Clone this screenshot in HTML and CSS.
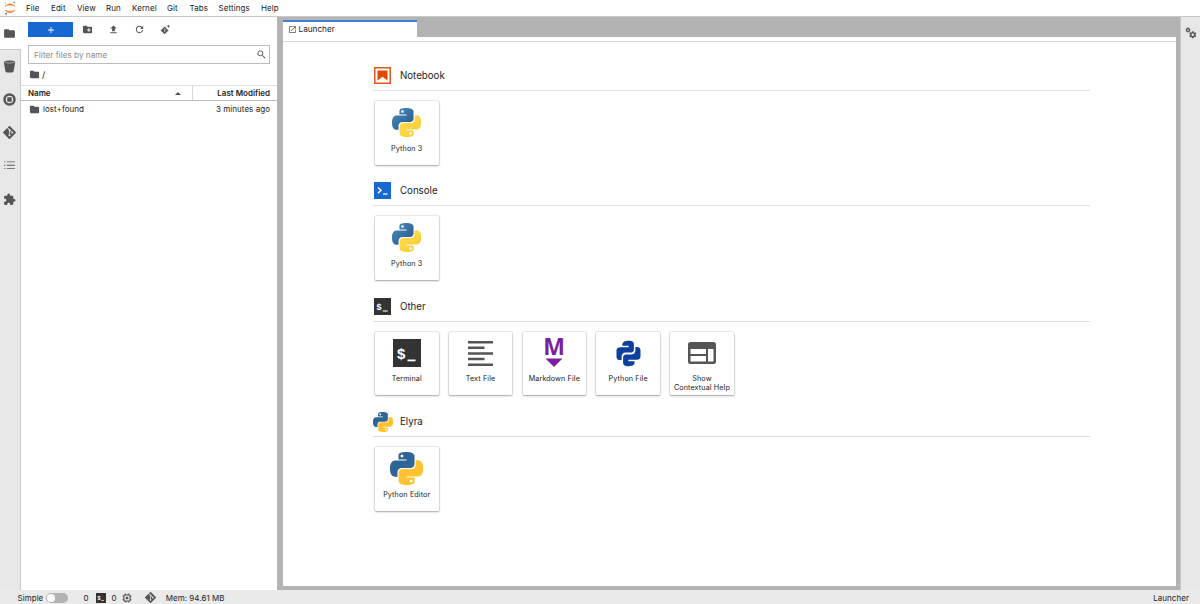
FILE: index.html
```html
<!DOCTYPE html>
<html lang="en">
<head>
    <meta charset="UTF-8">
    <meta name="viewport" content="width=device-width, initial-scale=1.0">
    <title>JupyterLab</title>
    <link rel="stylesheet" href="styles.css">
</head>
<body>

    <!-- Shared icons -->
    <svg class="sprite">
        <linearGradient id="py-blue" x1="0" y1="0" x2="1" y2="1">
            <stop offset="0" stop-color="#4a8fc4"/>
            <stop offset="1" stop-color="#265380"/>
        </linearGradient>
        <linearGradient id="py-yellow" x1="0" y1="0" x2="1" y2="1">
            <stop offset="0" stop-color="#ffdf55"/>
            <stop offset="1" stop-color="#f8ca35"/>
        </linearGradient>
        <symbol id="folder" viewBox="0 0 24 24"><path d="M10 4H4c-1.1 0-1.99.9-1.99 2L2 18c0 1.1.9 2 2 2h16c1.1 0 2-.9 2-2V8c0-1.1-.9-2-2-2h-8l-2-2z"/></symbol>
        <symbol id="git" viewBox="0 0 24 24"><path d="M23.546 10.93L13.067.452c-.604-.603-1.582-.603-2.188 0L8.708 2.627l2.76 2.76c.645-.215 1.379-.07 1.889.441.516.515.658 1.258.438 1.9l2.658 2.66c.645-.223 1.387-.078 1.9.435.721.72.721 1.884 0 2.604-.719.719-1.881.719-2.6 0-.539-.541-.674-1.337-.404-1.996L12.86 8.955v6.525c.176.086.342.203.488.348.713.721.713 1.883 0 2.6-.719.721-1.889.721-2.609 0-.719-.719-.719-1.879 0-2.598.182-.18.387-.316.605-.406V8.835c-.217-.091-.424-.222-.6-.401-.545-.545-.676-1.342-.396-2.009L7.636 3.7.45 10.881c-.6.605-.6 1.584 0 2.189l10.48 10.477c.604.604 1.582.604 2.186 0l10.43-10.43c.605-.603.605-1.582 0-2.187"/></symbol>
        <symbol id="gear" viewBox="0 0 24 24"><path d="M19.43 12.98c.04-.32.07-.64.07-.98s-.03-.66-.07-.98l2.11-1.65c.19-.15.24-.42.12-.64l-2-3.46c-.12-.22-.39-.3-.61-.22l-2.49 1c-.52-.4-1.08-.73-1.69-.98l-.38-2.65C14.46 2.18 14.25 2 14 2h-4c-.25 0-.46.18-.49.42l-.38 2.65c-.61.25-1.17.59-1.69.98l-2.49-1c-.23-.09-.49 0-.61.22l-2 3.46c-.13.22-.07.49.12.64l2.11 1.65c-.04.32-.07.65-.07.98s.03.66.07.98l-2.11 1.65c-.19.15-.24.42-.12.64l2 3.46c.12.22.39.3.61.22l2.49-1c.52.4 1.08.73 1.69.98l.38 2.65c.03.24.24.42.49.42h4c.25 0 .46-.18.49-.42l.38-2.65c.61-.25 1.17-.59 1.69-.98l2.49 1c.23.09.49 0 .61-.22l2-3.46c.12-.22.07-.49-.12-.64l-2.11-1.65zM12 15.5c-1.93 0-3.5-1.57-3.5-3.5s1.57-3.5 3.5-3.5 3.5 1.57 3.5 3.5-1.57 3.5-3.5 3.5z"/></symbol>
        <symbol id="python" viewBox="0 0 24 24">
            <path class="py-top" d="M14.25.18l.9.2.73.26.59.3.45.32.34.34.25.34.16.33.1.3.04.26.02.2-.01.13V8.5l-.05.63-.13.55-.21.46-.26.38-.3.31-.33.25-.35.19-.35.14-.33.1-.3.07-.26.04-.21.02H8.77l-.69.05-.59.14-.5.22-.41.27-.33.32-.27.35-.2.36-.15.37-.1.35-.07.32-.04.27-.02.21v3.06H3.17l-.21-.03-.28-.07-.32-.12-.35-.18-.36-.26-.36-.36-.35-.46-.32-.59-.28-.73-.21-.88-.14-1.05-.05-1.23.06-1.22.16-1.04.24-.87.32-.71.36-.57.4-.44.42-.33.42-.24.4-.16.36-.1.32-.05.24-.01h.16l.06.01h8.16v-.83H6.18l-.01-2.75-.02-.37.05-.34.11-.31.17-.28.25-.26.31-.23.38-.2.44-.18.51-.15.58-.12.64-.1.71-.06.77-.04.84-.02 1.27.05zm-6.3 1.98l-.23.33-.08.41.08.41.23.34.33.22.41.09.41-.09.33-.22.23-.34.08-.41-.08-.41-.23-.33-.33-.22-.41-.09-.41.09z"/>
            <path class="py-bottom" d="M21.1 6.11l.28.06.32.12.35.18.36.27.36.35.35.47.32.59.28.73.21.88.14 1.04.05 1.23-.06 1.23-.16 1.04-.24.86-.32.71-.36.57-.4.45-.42.33-.42.24-.4.16-.36.09-.32.05-.24.02-.16-.01h-8.22v.82h5.84l.01 2.76.02.36-.05.34-.11.31-.17.29-.25.25-.31.24-.38.2-.44.17-.51.15-.58.13-.64.09-.71.07-.77.04-.84.01-1.27-.04-1.07-.14-.9-.2-.73-.25-.59-.3-.45-.33-.34-.34-.25-.34-.16-.33-.1-.3-.04-.25-.02-.2.01-.13v-5.34l.05-.64.13-.54.21-.46.26-.38.3-.32.33-.24.35-.2.35-.14.33-.1.3-.06.26-.04.21-.02.13-.01h5.84l.69-.05.59-.14.5-.21.41-.28.33-.32.27-.35.2-.36.15-.36.1-.35.07-.32.04-.28.02-.21V6.07h2.09l.14.01zm-6.47 14.25l-.23.33-.08.41.08.41.23.33.33.23.41.08.41-.08.33-.23.23-.33.08-.41-.08-.41-.23-.33-.33-.23-.41-.08-.41.08z"/>
        </symbol>
    </svg>

    <!-- Menu bar -->
    <div class="menubar">
        <svg class="logo" viewBox="0 0 12 14">
            <path d="M1 5.2Q6 .2 11 5.2Q6 2.9 1 5.2zM1 9.2Q6 14.2 11 9.2Q6 11.6 1 9.2z" fill="#f37726" stroke="#f37726" stroke-width=".5"/>
            <circle cx="10.2" cy="1.6" r=".8" fill="#767677"/>
            <circle cx="1.4" cy="2.1" r=".5" fill="#767677"/>
            <circle cx="2.2" cy="12.7" r=".9" fill="#616262"/>
        </svg>
        <span class="m-file">File</span>
        <span class="m-edit">Edit</span>
        <span class="m-view">View</span>
        <span class="m-run">Run</span>
        <span class="m-kernel">Kernel</span>
        <span class="m-git">Git</span>
        <span class="m-tabs">Tabs</span>
        <span class="m-settings">Settings</span>
        <span class="m-help">Help</span>
    </div>

    <div class="main">
        <!-- Left activity bar -->
        <div class="activity-bar">
            <div class="activity active"><svg class="icon-13"><use href="#folder"/></svg></div>
            <div class="activity">
                <svg class="icon-13" viewBox="0 0 24 24"><path d="M1.5 4c0-4 21-4 21 0l-3 17c-.5 3-14.5 3-15 0z"/><path d="M3.5 4.500q8.500 2.500 17 0" fill="none" stroke="#e8e8e8" stroke-width="1"/></svg>
            </div>
            <div class="activity">
                <svg class="icon-13" viewBox="0 0 24 24"><circle cx="12" cy="12" r="9.200" fill="none" stroke="#555" stroke-width="4.600"/><rect x="7.800" y="7.800" width="8.400" height="8.400" rx="1"/></svg>
            </div>
            <div class="activity"><svg class="icon-13"><use href="#git"/></svg></div>
            <div class="activity">
                <svg class="icon-13" viewBox="0 0 24 24"><path d="M2 4.500h2.500v1.600H2zM7 4.500h15v1.600H7zM2 10.700h2.500v1.600H2zM7 10.700h15v1.600H7zM2 16.900h2.500v1.600H2zM7 16.900h15v1.600H7z"/></svg>
            </div>
            <div class="activity">
                <svg class="icon-13" viewBox="0 0 24 24"><path d="M20.5 11H19V7c0-1.1-.9-2-2-2h-4V3.5C13 2.12 11.88 1 10.5 1S8 2.12 8 3.5V5H4c-1.1 0-1.99.9-1.99 2v3.8H3.5c1.49 0 2.7 1.21 2.7 2.7s-1.21 2.7-2.7 2.7H2V20c0 1.1.9 2 2 2h3.8v-1.5c0-1.49 1.21-2.7 2.7-2.7 1.49 0 2.7 1.21 2.7 2.7V22H17c1.1 0 2-.9 2-2v-4h1.5c1.38 0 2.5-1.12 2.5-2.5S21.88 11 20.5 11z"/></svg>
            </div>
        </div>

        <!-- File browser -->
        <div class="file-browser">
            <div class="toolbar">
                <div class="new-btn"><svg viewBox="0 0 24 24"><path d="M19 13h-6v6h-2v-6H5v-2h6V5h2v6h6v2z"/></svg></div>
                <svg class="icon-11" viewBox="0 0 24 24"><path d="M20 6h-8l-2-2H4c-1.11 0-1.99.89-1.99 2L2 18c0 1.11.89 2 2 2h16c1.11 0 2-.89 2-2V8c0-1.11-.89-2-2-2zm-1 8h-3v3h-2v-3h-3v-2h3V9h2v3h3v2z"/></svg>
                <svg class="icon-11" viewBox="0 0 24 24"><path d="M9 16h6v-6h4l-7-7-7 7h4zm-4 2h14v2H5z"/></svg>
                <svg class="icon-11" viewBox="0 0 18 18"><path d="M9 13.5c-2.49 0-4.5-2.01-4.5-4.5S6.51 4.5 9 4.5c1.24 0 2.36.52 3.17 1.33L10 8h5V3l-1.76 1.76C12.15 3.68 10.66 3 9 3 5.69 3 3.01 5.69 3.01 9S5.69 15 9 15c2.97 0 5.43-2.16 5.9-5h-1.52c-.46 2-2.24 3.5-4.38 3.5z"/></svg>
                <svg class="icon-11" viewBox="0 0 24 24"><path d="M10 5.500l8.500 8.500-8.500 8.500L1.500 14z"/><path d="M10 10v8M10 11l4 3.500" fill="none" stroke="#fff" stroke-width="1.200"/><path d="M18.500 2v6M15.500 5h6" fill="none" stroke="#555" stroke-width="1.800"/></svg>
            </div>
            <div class="filter">
                <span>Filter files by name</span>
                <svg class="icon-11" viewBox="0 0 24 24"><path d="M15.5 14h-.79l-.28-.27C15.41 12.59 16 11.11 16 9.5 16 5.91 13.09 3 9.5 3S3 5.91 3 9.5 5.91 16 9.5 16c1.61 0 3.09-.59 4.23-1.57l.27.28v.79l5 4.99L20.49 19l-4.99-5zm-6 0C7.01 14 5 11.99 5 9.5S7.01 5 9.5 5 14 7.01 14 9.5 11.99 14 9.5 14z"/></svg>
            </div>
            <div class="crumbs"><svg class="icon-11"><use href="#folder"/></svg><span>/</span></div>
            <div class="list-header">
                <div class="col-name">Name <svg class="caret" viewBox="0 0 6 3"><path d="M0 3l3-3 3 3z"/></svg></div>
                <div class="col-modified">Last Modified</div>
            </div>
            <div class="list-item">
                <svg class="icon-11"><use href="#folder"/></svg>
                <span class="item-name">lost+found</span>
                <span class="item-modified">3 minutes ago</span>
            </div>
        </div>

        <!-- Dock area -->
        <div class="dock">
            <div class="tab">
                <svg class="tab-icon" viewBox="0 0 24 24"><path d="M19 19H5V5h7V3H5a2 2 0 00-2 2v14a2 2 0 002 2h14c1.1 0 2-.9 2-2v-7h-2v7zM14 3v2h3.59l-9.83 9.83 1.41 1.41L19 6.41V10h2V3h-7z"/></svg>
                <span>Launcher</span>
            </div>
            <div class="launcher">
                <div class="section">
                    <div class="section-header">
                        <svg class="section-icon" viewBox="0 0 17 17"><rect x=".75" y=".75" width="15.5" height="15.5" fill="#fff" stroke="#e2571e" stroke-width="1.5"/><path d="M3.5 3.5h10v10l-5-3.800-5 3.800z" fill="#e24a00"/></svg>
                        <span>Notebook</span>
                    </div>
                    <div class="cards">
                        <div class="card"><div class="card-icon"><svg class="python gradient"><use href="#python"/></svg></div><p>Python 3</p></div>
                    </div>
                </div>
                <div class="section">
                    <div class="section-header">
                        <svg class="section-icon" viewBox="0 0 17 17"><rect width="17" height="17" fill="#1868d1"/><path d="M4 5.500l3 2.800-3 2.800" fill="none" stroke="#fff" stroke-width="1.500"/><path d="M9 12h4.500" stroke="#fff" stroke-width="1.300"/></svg>
                        <span>Console</span>
                    </div>
                    <div class="cards">
                        <div class="card"><div class="card-icon"><svg class="python gradient"><use href="#python"/></svg></div><p>Python 3</p></div>
                    </div>
                </div>
                <div class="section">
                    <div class="section-header">
                        <svg class="section-icon" viewBox="0 0 28 28"><rect width="28" height="28" fill="#333"/><text x="4" y="20" class="term-text">$</text><path d="M14.500 20.500h8v1.800h-8z" fill="#fff"/></svg>
                        <span>Other</span>
                    </div>
                    <div class="cards">
                        <div class="card">
                            <div class="card-icon"><svg class="term" viewBox="0 0 28 28"><rect width="28" height="28" fill="#333"/><text x="4" y="20" class="term-text">$</text><path d="M14.500 20.500h8v1.800h-8z" fill="#fff"/></svg></div>
                            <p>Terminal</p>
                        </div>
                        <div class="card">
                            <div class="card-icon"><svg class="textfile" viewBox="0 0 25 25"><path d="M0 0h25v2.500H0zM0 5.600h16.500v2.500H0zM0 11.200h25v2.500H0zM0 16.800h16.500v2.500H0zM0 22.400h25v2.500H0z"/></svg></div>
                            <p>Text File</p>
                        </div>
                        <div class="card">
                            <div class="card-icon"><svg class="markdown" viewBox="0 0 24 32"><text x="12" y="18" class="md-text">M</text><path d="M3.500 21.500h17L12 30z"/></svg></div>
                            <p>Markdown File</p>
                        </div>
                        <div class="card">
                            <div class="card-icon"><svg class="pyfile" viewBox="0 0 22 22"><path d="M11.1 6.9V5.8H6.9c0-.5 0-1.3.2-1.6.4-.7.8-1.1 1.7-1.4 1.7-.3 2.5-.3 3.9-.1 1 .1 1.9.9 1.9 1.9v4.2c0 .5-.9 1.6-2 1.6H8.800c-1.5 0-2.4 1.4-2.4 2.8v2.2H4.700C3.500 15.100 3 14 3 13.100V9c-.1-1 .6-2 1.800-2 1.500-.1 6.300-.1 6.300-.1z"/><path d="M10.900 15.100v1.100h4.200c0 .5 0 1.300-.2 1.600-.4.7-.8 1.100-1.700 1.400-1.700.3-2.500.3-3.900.1-1-.1-1.900-.9-1.900-1.900v-4.200c0-.5.9-1.600 2-1.600h3.800c1.500 0 2.400-1.400 2.400-2.800V6.600h1.700C18.500 6.900 19 8 19 8.900V13c0 1-.7 2.100-1.900 2.100h-6.200z"/></svg></div>
                            <p>Python File</p>
                        </div>
                        <div class="card">
                            <div class="card-icon"><svg class="help" viewBox="0 0 28 22"><path fill-rule="evenodd" d="M2.500 0h23A2.500 2.500 0 0 1 28 2.500v17a2.500 2.500 0 0 1-2.500 2.500h-23A2.500 2.500 0 0 1 0 19.500v-17A2.500 2.500 0 0 1 2.500 0zM2.500 7v5h15.500V7zM2.500 14v5.500h15.500V14zM20 7v12.500h5.500V7z"/></svg></div>
                            <p>Show<br>Contextual Help</p>
                        </div>
                    </div>
                </div>
                <div class="section">
                    <div class="section-header">
                        <svg class="section-icon python-small flat"><use href="#python"/></svg>
                        <span>Elyra</span>
                    </div>
                    <div class="cards">
                        <div class="card"><div class="card-icon"><svg class="python large flat"><use href="#python"/></svg></div><p>Python Editor</p></div>
                    </div>
                </div>
            </div>
        </div>

        <!-- Right bar -->
        <div class="right-bar">
            <svg viewBox="0 0 12 12"><use href="#gear" width="6" height="6"/><use href="#gear" x="3.5" y="3.5" width="8.5" height="8.5"/></svg>
        </div>
    </div>

    <!-- Status bar -->
    <div class="statusbar">
        <span class="s-simple">Simple</span>
        <span class="switch"></span>
        <span class="s-count">0</span>
        <svg class="s-term" viewBox="0 0 28 28"><rect width="28" height="28" fill="#333"/><text x="4" y="20" class="term-text">$</text><path d="M14.500 20.500h8v1.800h-8z" fill="#fff"/></svg>
        <span>0</span>
        <svg class="s-kernel" viewBox="0 0 24 24"><path d="M8 1v22M16 1v22M1 8h22M1 16h22" stroke="#555" stroke-width="2"/><rect x="4.500" y="4.500" width="15" height="15" rx="3" fill="#eee" stroke="#555" stroke-width="3"/><rect x="9" y="9" width="6" height="6"/></svg>
        <svg class="s-git"><use href="#git"/></svg>
        <span>Mem: 94.61 MB</span>
        <span class="s-launcher">Launcher</span>
    </div>

</body>
</html>
```

FILE: styles.css
```css
body {
    margin: 0;
    font-family: Inter, "Liberation Sans", sans-serif;
    font-size: 8px;
    color: #222;
    display: flex;
    flex-direction: column;
    height: 604px;
    overflow: hidden;
    background-color: #fff;
}
svg {
    display: block;
    flex: none;
    fill: #555;
    overflow: visible;
}
.sprite {
    position: absolute;
    width: 0;
    height: 0;
}
.icon-13 {
    width: 13px;
    height: 13px;
}
.icon-11 {
    width: 11px;
    height: 11px;
}

/* Menu bar */
.menubar {
    display: flex;
    align-items: center;
    height: 16px;
    border-bottom: 1px solid #c8c8c8;
    flex: none;
}
.logo {
    width: 12px;
    height: 14px;
    margin: 0 10px 0 4px;
}
.menubar span {
    flex: none;
    letter-spacing: 0.08px;
}
.m-file { width: 25px; }
.m-edit { width: 26px; }
.m-view { width: 29px; }
.m-run { width: 26px; }
.m-kernel { width: 35px; }
.m-git { width: 22.5px; }
.m-tabs { width: 29px; }
.m-settings { width: 42.5px; }

.main {
    display: flex;
    flex: 1;
    min-height: 0;
}

/* Left activity bar */
.activity-bar {
    width: 21px;
    background-color: #e8e8e8;
    border-right: 1px solid #c8c8c8;
    box-sizing: border-box;
    flex: none;
}
.activity {
    box-sizing: border-box;
    height: 33.1px;
    padding-left: 3.2px;
    display: flex;
    align-items: center;
}
.activity.active {
    margin-right: -1px;
    background-color: #fff;
    border-bottom: 1px solid #c8c8c8;
}

/* File browser */
.file-browser {
    width: 256px;
    background-color: #fff;
    flex: none;
}
.toolbar {
    display: flex;
    align-items: center;
    gap: 15.1px;
    padding: 5px 0 0 7px;
    height: 15px;
}
.new-btn {
    width: 45px;
    height: 15px;
    margin-right: -6.5px;
    background-color: #1868d1;
    display: flex;
    align-items: center;
    justify-content: center;
}
.new-btn svg {
    width: 10px;
    height: 10px;
    fill: #fff;
}
.filter {
    box-sizing: border-box;
    height: 19px;
    margin: 8px 7px 0;
    padding: 0 2px 0 5px;
    border: 1px solid #bdbdbd;
    display: flex;
    align-items: center;
    justify-content: space-between;
    color: #8c8c8c;
    font-size: 8.2px;
}
.crumbs {
    display: flex;
    align-items: center;
    gap: 2px;
    height: 21px;
    padding-left: 8px;
    font-size: 9px;
}
.list-header {
    display: flex;
    height: 14px;
    border-top: 1px solid #dcdcdc;
    border-bottom: 1px solid #b8b8b8;
    font-weight: 600;
    line-height: 15px;
}
.col-name {
    width: 157px;
    padding: 0 7px;
    display: flex;
    align-items: center;
    justify-content: space-between;
    border-right: 1px solid #d8d8d8;
}
.caret {
    width: 6px;
    height: 3px;
    margin-right: 4px;
}
.col-modified {
    flex: 1;
    text-align: right;
    padding-right: 7px;
}
.list-item {
    display: flex;
    align-items: center;
    height: 16px;
    padding: 0 7px 0 8px;
    letter-spacing: 0.04px;
}
.item-name {
    flex: 1;
    padding-left: 3px;
}

/* Dock area */
.dock {
    flex: 1;
    display: flex;
    flex-direction: column;
    padding: 3px 4px 4px 5.5px;
    background-color: #b3b3b3;
}
.tab {
    box-sizing: border-box;
    width: 134px;
    height: 17px;
    padding: 0 0 1px 5px;
    display: flex;
    align-items: center;
    gap: 2px;
    border-top: 2px solid #3b7fd6;
    background-color: #fff;
    font-size: 8.2px;
}
.tab-icon {
    width: 9px;
    height: 9px;
}
.launcher {
    flex: 1;
    padding: 20px 86px 0 90.5px;
    background-color: #fff;
    background-image: linear-gradient(#d8d8d8, #d8d8d8);
    background-size: 100% 1px;
    background-position: 0 4px;
    background-repeat: no-repeat;
}
.section {
    height: 115.4px;
}
.section-header {
    box-sizing: border-box;
    height: 34px;
    padding: 4px 0 0 1px;
    border-bottom: 1px solid #e0e0e0;
    display: flex;
    align-items: center;
    gap: 9px;
    font-size: 9.7px;
}
.section-icon {
    width: 17px;
    height: 17px;
}
.python-small {
    width: 20px;
    height: 20px;
    margin: 0 -2px 0 -1px;
}
.cards {
    display: flex;
    gap: 10.3px;
    padding: 10px 0 0 2px;
}
.card {
    width: 63.5px;
    height: 63.5px;
    border-radius: 1px;
    background-color: #fff;
    box-shadow: 0 0 1.5px rgba(0, 0, 0, 0.4), 0 1px 2px rgba(0, 0, 0, 0.3);
    text-align: center;
}
.card-icon {
    height: 42.5px;
    display: flex;
    align-items: center;
    justify-content: center;
}
.card p {
    margin: 0;
    font-size: 7.2px;
    line-height: 9px;
    letter-spacing: 0.12px;
    white-space: nowrap;
}
.python {
    width: 29px;
    height: 29px;
}
.python.large {
    width: 33px;
    height: 33px;
}
.gradient {
    --top: url(#py-blue);
    --bottom: url(#py-yellow);
}
.flat {
    --top: #2f6596;
    --bottom: #ffc331;
}
.py-top {
    fill: var(--top);
}
.py-bottom {
    fill: var(--bottom);
}
.term {
    width: 28px;
    height: 28px;
}
.term-text {
    font-family: "Liberation Sans", sans-serif;
    font-size: 15px;
    font-weight: 700;
    fill: #fff;
}
.textfile {
    width: 25px;
    height: 25px;
}
.markdown {
    width: 24px;
    height: 32px;
    fill: #7b1fa2;
}
.md-text {
    font-family: "Open Sans", sans-serif;
    font-weight: 700;
    font-size: 23px;
    text-anchor: middle;
}
.pyfile {
    width: 33px;
    height: 33px;
    fill: #0d409c;
}
.help {
    width: 28px;
    height: 22px;
}

/* Right bar */
.right-bar {
    width: 19px;
    background-color: #e8e8e8;
    border-left: 1px solid #c8c8c8;
    flex: none;
}
.right-bar svg {
    width: 12px;
    height: 12px;
    margin: 10px 0 0 4px;
}

/* Status bar */
.statusbar {
    display: flex;
    align-items: center;
    height: 14px;
    padding: 1px 11px 0 17.5px;
    box-sizing: border-box;
    background-color: #eaeaea;
    letter-spacing: 0.04px;
    flex: none;
}
.s-simple {
    width: 28.5px;
}
.switch {
    box-sizing: border-box;
    width: 22px;
    height: 10px;
    padding: 1px;
    margin-right: 15.5px;
    border-radius: 5px;
    background-color: #b3b3b3;
}
.switch::before {
    content: "";
    display: block;
    width: 8px;
    height: 8px;
    border-radius: 50%;
    background-color: #fff;
}
.s-term {
    width: 10px;
    height: 10px;
    margin: 0 6px 0 7px;
}
.s-kernel {
    width: 10px;
    height: 10px;
    margin: 0 12.5px 0 5.5px;
}
.s-git {
    width: 11px;
    height: 11px;
    margin-right: 10px;
}
.s-launcher {
    margin-left: auto;
}
```
